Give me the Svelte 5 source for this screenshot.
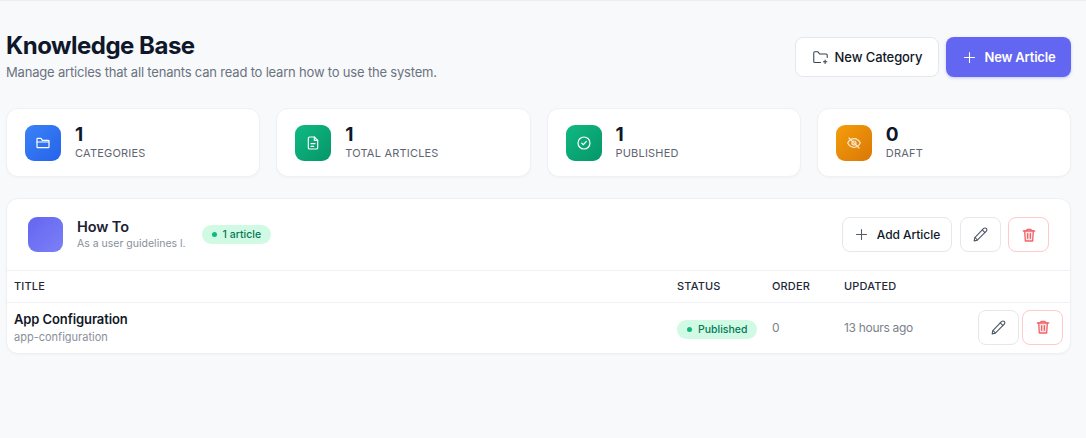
<script>
  const stats = [
    { value: 1, label: 'Categories', tone: 'blue', icon: 'folder' },
    { value: 1, label: 'Total Articles', tone: 'teal', icon: 'doc' },
    { value: 1, label: 'Published', tone: 'teal', icon: 'check' },
    { value: 0, label: 'Draft', tone: 'amber', icon: 'eye' }
  ];
</script>

{#snippet pencil()}
  <svg class="ic pen" viewBox="0 0 24 24" fill="none" stroke="#4b5563" stroke-width="1.5" stroke-linecap="round" stroke-linejoin="round">
    <path d="M16.500 3.500a2.600 2.600 0 0 1 3.700 3.700L7.500 20 3 21l1-4.500z" />
    <path d="M14.500 5.500l3.800 3.800" />
    <path d="M4.500 16.500l3 3" />
  </svg>
{/snippet}

{#snippet trash()}
  <svg class="ic bin" viewBox="0 0 24 24" fill="#fde4e4" stroke="#f0646a" stroke-width="2" stroke-linecap="round" stroke-linejoin="round">
    <path d="M3.500 6h17" />
    <path d="M9 6V3.500h6V6" />
    <path d="M5.500 6l1 15h11l1-15z" />
    <path d="M10 10v7M14 10v7" />
  </svg>
{/snippet}

{#snippet plus()}
  <svg class="ic" viewBox="0 0 24 24" fill="none" stroke="currentColor" stroke-width="1.700" stroke-linecap="round">
    <path d="M12 4v16M4 12h16" />
  </svg>
{/snippet}

<div class="page">
  <header class="top">
    <div>
      <h1>Knowledge Base</h1>
      <p class="sub">Manage articles that all tenants can read to learn how to use the system.</p>
    </div>
    <div class="top-actions">
      <button class="btn ghost">
        <svg class="ic folder" viewBox="0 0 24 24" fill="none" stroke="#374151" stroke-width="1.500" stroke-linecap="round" stroke-linejoin="round">
          <path d="M12 19H4a1.500 1.500 0 0 1-1.500-1.500v-12A1.500 1.500 0 0 1 4 4h4.500l2.200 3H20a1.500 1.500 0 0 1 1.500 1.500V12" />
          <path d="M18.500 15.500v5M16 18h5" />
        </svg>
        New Category
      </button>
      <button class="btn primary">{@render plus()} New Article</button>
    </div>
  </header>

  <section class="stats">
    {#each stats as s}
      <div class="stat">
        <div class="stat-icon {s.tone}">
          <svg viewBox="0 0 24 24" fill="none" stroke="#fff" stroke-width="1.800" stroke-linecap="round" stroke-linejoin="round">
            {#if s.icon === 'folder'}
              <path d="M4 5h5l2 3h9a1 1 0 0 1 1 1v9a1 1 0 0 1-1 1H4a1 1 0 0 1-1-1V6a1 1 0 0 1 1-1z" />
              <path d="M3 10.500h18" />
            {:else if s.icon === 'doc'}
              <path d="M14 3H7a2 2 0 0 0-2 2v14a2 2 0 0 0 2 2h10a2 2 0 0 0 2-2V8z" />
              <path d="M14 3v5h5" />
              <path d="M9 13h6M9 17h4" />
            {:else if s.icon === 'check'}
              <circle cx="12" cy="12" r="9" />
              <path d="M8.500 12.200l2.400 2.400 4.600-5" />
            {:else}
              <g opacity="0.8">
                <path d="M2.500 12S6 5.500 12 5.500 21.500 12 21.500 12 18 18.500 12 18.500 2.500 12 2.500 12z" />
                <circle cx="12" cy="12" r="3" />
                <path d="M4.500 4.500l15 15" />
              </g>
            {/if}
          </svg>
        </div>
        <div>
          <div class="value">{s.value}</div>
          <div class="label">{s.label}</div>
        </div>
      </div>
    {/each}
  </section>

  <section class="panel">
    <div class="panel-head">
      <div class="swatch"></div>
      <div class="cat-text">
        <div class="cat-name">How To</div>
        <div class="cat-desc">As a user guidelines l.</div>
      </div>
      <span class="pill count"><i></i>1 article</span>
      <div class="panel-actions">
        <button class="btn small ghost">{@render plus()} Add Article</button>
        <button class="icon-btn">{@render pencil()}</button>
        <button class="icon-btn danger">{@render trash()}</button>
      </div>
    </div>

    <div class="row heading">
      <div>Title</div>
      <div>Status</div>
      <div>Order</div>
      <div>Updated</div>
      <div></div>
    </div>
    <div class="row item">
      <div>
        <div class="art-title">App Configuration</div>
        <div class="art-slug">app-configuration</div>
      </div>
      <div><span class="pill status"><i></i>Published</span></div>
      <div class="muted">0</div>
      <div class="muted">13 hours ago</div>
      <div class="row-actions">
        <button class="icon-btn">{@render pencil()}</button>
        <button class="icon-btn danger">{@render trash()}</button>
      </div>
    </div>
  </section>
</div>

<style>
  :global(body) {
    margin: 0;
    background: #f8f9fb;
  }
  .page {
    box-sizing: border-box;
    height: 438px;
    overflow: hidden;
    padding: 31px 15px 0 6px;
    border-top: 1px solid #eceef1;
    background: #f8f9fb;
    font-family: Inter, "Liberation Sans", sans-serif;
    color: #111827;
  }
  .top {
    display: flex;
    justify-content: space-between;
    align-items: flex-start;
    margin-bottom: 27px;
  }
  h1 {
    margin: 0;
    font-size: 24px;
    line-height: 28px;
    font-weight: 700;
    letter-spacing: -0.5px;
    color: #0f172a;
  }
  .sub {
    margin: 3px 0 0;
    font-size: 13px;
    line-height: 18px;
    letter-spacing: -0.19px;
    color: #6b7280;
  }
  .top-actions {
    display: flex;
    gap: 7px;
    margin-top: 5px;
  }
  button {
    font-family: inherit;
    cursor: pointer;
  }
  .btn {
    display: inline-flex;
    align-items: center;
    justify-content: center;
    box-sizing: border-box;
    height: 40px;
    gap: 6px;
    border-radius: 8px;
    font-size: 13px;
    font-weight: 500;
    letter-spacing: -0.1px;
  }
  .ghost {
    width: 144px;
    background: #fff;
    border: 1px solid #e5e7eb;
    color: #111827;
  }
  .primary {
    width: 125px;
    background: #6366f1;
    border: 0;
    color: #fff;
    font-weight: 600;
    letter-spacing: -0.2px;
    gap: 8px;
    box-shadow: 0 1px 3px rgba(99, 102, 241, 0.35);
  }
  .small {
    width: 110px;
    height: 35px;
    font-size: 12px;
    letter-spacing: -0.05px;
    gap: 8px;
  }
  .small .ic {
    color: #555b66;
  }
  .ic {
    width: 15px;
    height: 15px;
    flex: none;
  }
  .pen {
    width: 17px;
    height: 17px;
  }
  .bin {
    width: 16px;
    height: 16px;
  }
  .folder {
    width: 17px;
    height: 17px;
  }
  .stats {
    display: grid;
    grid-template-columns: repeat(4, 1fr);
    gap: 16px;
    margin-bottom: 21px;
  }
  .stat {
    box-sizing: border-box;
    height: 69px;
    display: flex;
    align-items: center;
    gap: 14px;
    padding: 0 18px;
    background: #fff;
    border: 1px solid #f0f1f4;
    border-radius: 12px;
    box-shadow: 0 1px 2px rgba(15, 23, 42, 0.03);
  }
  .stat-icon {
    width: 36px;
    height: 36px;
    border-radius: 9px;
    display: flex;
    align-items: center;
    justify-content: center;
    flex: none;
  }
  .stat-icon svg {
    width: 16px;
    height: 16px;
  }
  .blue {
    background: linear-gradient(135deg, #3b82f6, #2563eb);
  }
  .teal {
    background: linear-gradient(135deg, #10b981, #059669);
  }
  .amber {
    background: linear-gradient(135deg, #f59e0b, #d97706);
  }
  .value {
    font-size: 19px;
    line-height: 19px;
    font-weight: 700;
    color: #0f172a;
  }
  .label {
    margin-top: 2px;
    font-size: 11px;
    line-height: 14px;
    font-weight: 400;
    letter-spacing: 0.2px;
    text-transform: uppercase;
    color: #5f6570;
  }
  .panel {
    box-sizing: border-box;
    height: 156px;
    background: #fff;
    border: 1px solid #eef0f3;
    border-radius: 12px;
    box-shadow: 0 1px 2px rgba(15, 23, 42, 0.03);
  }
  .panel-head {
    box-sizing: border-box;
    height: 72px;
    display: flex;
    align-items: center;
    padding: 0 21px;
    border-bottom: 1px solid #f0f1f4;
  }
  .swatch {
    width: 35px;
    height: 35px;
    border-radius: 9px;
    background: linear-gradient(135deg, #6366f1, #7c80f6);
    margin-right: 14px;
    flex: none;
  }
  .cat-text {
    padding-bottom: 2px;
  }
  .cat-name {
    font-size: 14.500px;
    line-height: 19px;
    font-weight: 600;
    letter-spacing: -0.1px;
    color: #1a2233;
  }
  .cat-desc {
    margin-top: 1px;
    font-size: 10.500px;
    line-height: 14px;
    color: #8a909b;
  }
  .pill {
    display: inline-flex;
    align-items: center;
    box-sizing: border-box;
    gap: 6px;
    height: 19px;
    border-radius: 10px;
    background: #d1fae5;
    color: #047857;
    font-size: 10.500px;
    font-weight: 500;
    padding: 0 10px;
  }
  .pill i {
    width: 5px;
    height: 5px;
    border-radius: 50%;
    background: #10b981;
  }
  .count {
    margin-left: 16px;
  }
  .panel-actions {
    margin-left: auto;
    display: flex;
    gap: 7.500px;
  }
  .icon-btn {
    box-sizing: border-box;
    width: 41px;
    height: 35px;
    display: flex;
    align-items: center;
    justify-content: center;
    padding: 0;
    border-radius: 8px;
    background: #fff;
    border: 1px solid #e5e7eb;
  }
  .danger {
    border-color: #fecaca;
  }
  .row {
    display: grid;
    grid-template-columns: 663px 95px 72px 1fr auto;
    align-items: center;
    padding: 0 7px;
  }
  .heading {
    box-sizing: border-box;
    height: 32px;
    padding-bottom: 2px;
    border-bottom: 1px solid #f0f1f4;
    font-size: 11px;
    font-weight: 500;
    letter-spacing: 0.15px;
    text-transform: uppercase;
    color: #1f2937;
  }
  .item {
    box-sizing: border-box;
    height: 50px;
    padding-bottom: 2px;
  }
  .art-title {
    margin-top: 1px;
    font-size: 13px;
    line-height: 17px;
    font-weight: 600;
    letter-spacing: -0.1px;
    color: #111827;
  }
  .art-slug {
    margin-top: 2px;
    font-size: 11px;
    line-height: 14px;
    color: #8a909b;
  }
  .muted {
    font-size: 12px;
    letter-spacing: -0.3px;
    color: #7b818c;
  }
  .row-actions {
    display: flex;
    gap: 3px;
  }
</style>
